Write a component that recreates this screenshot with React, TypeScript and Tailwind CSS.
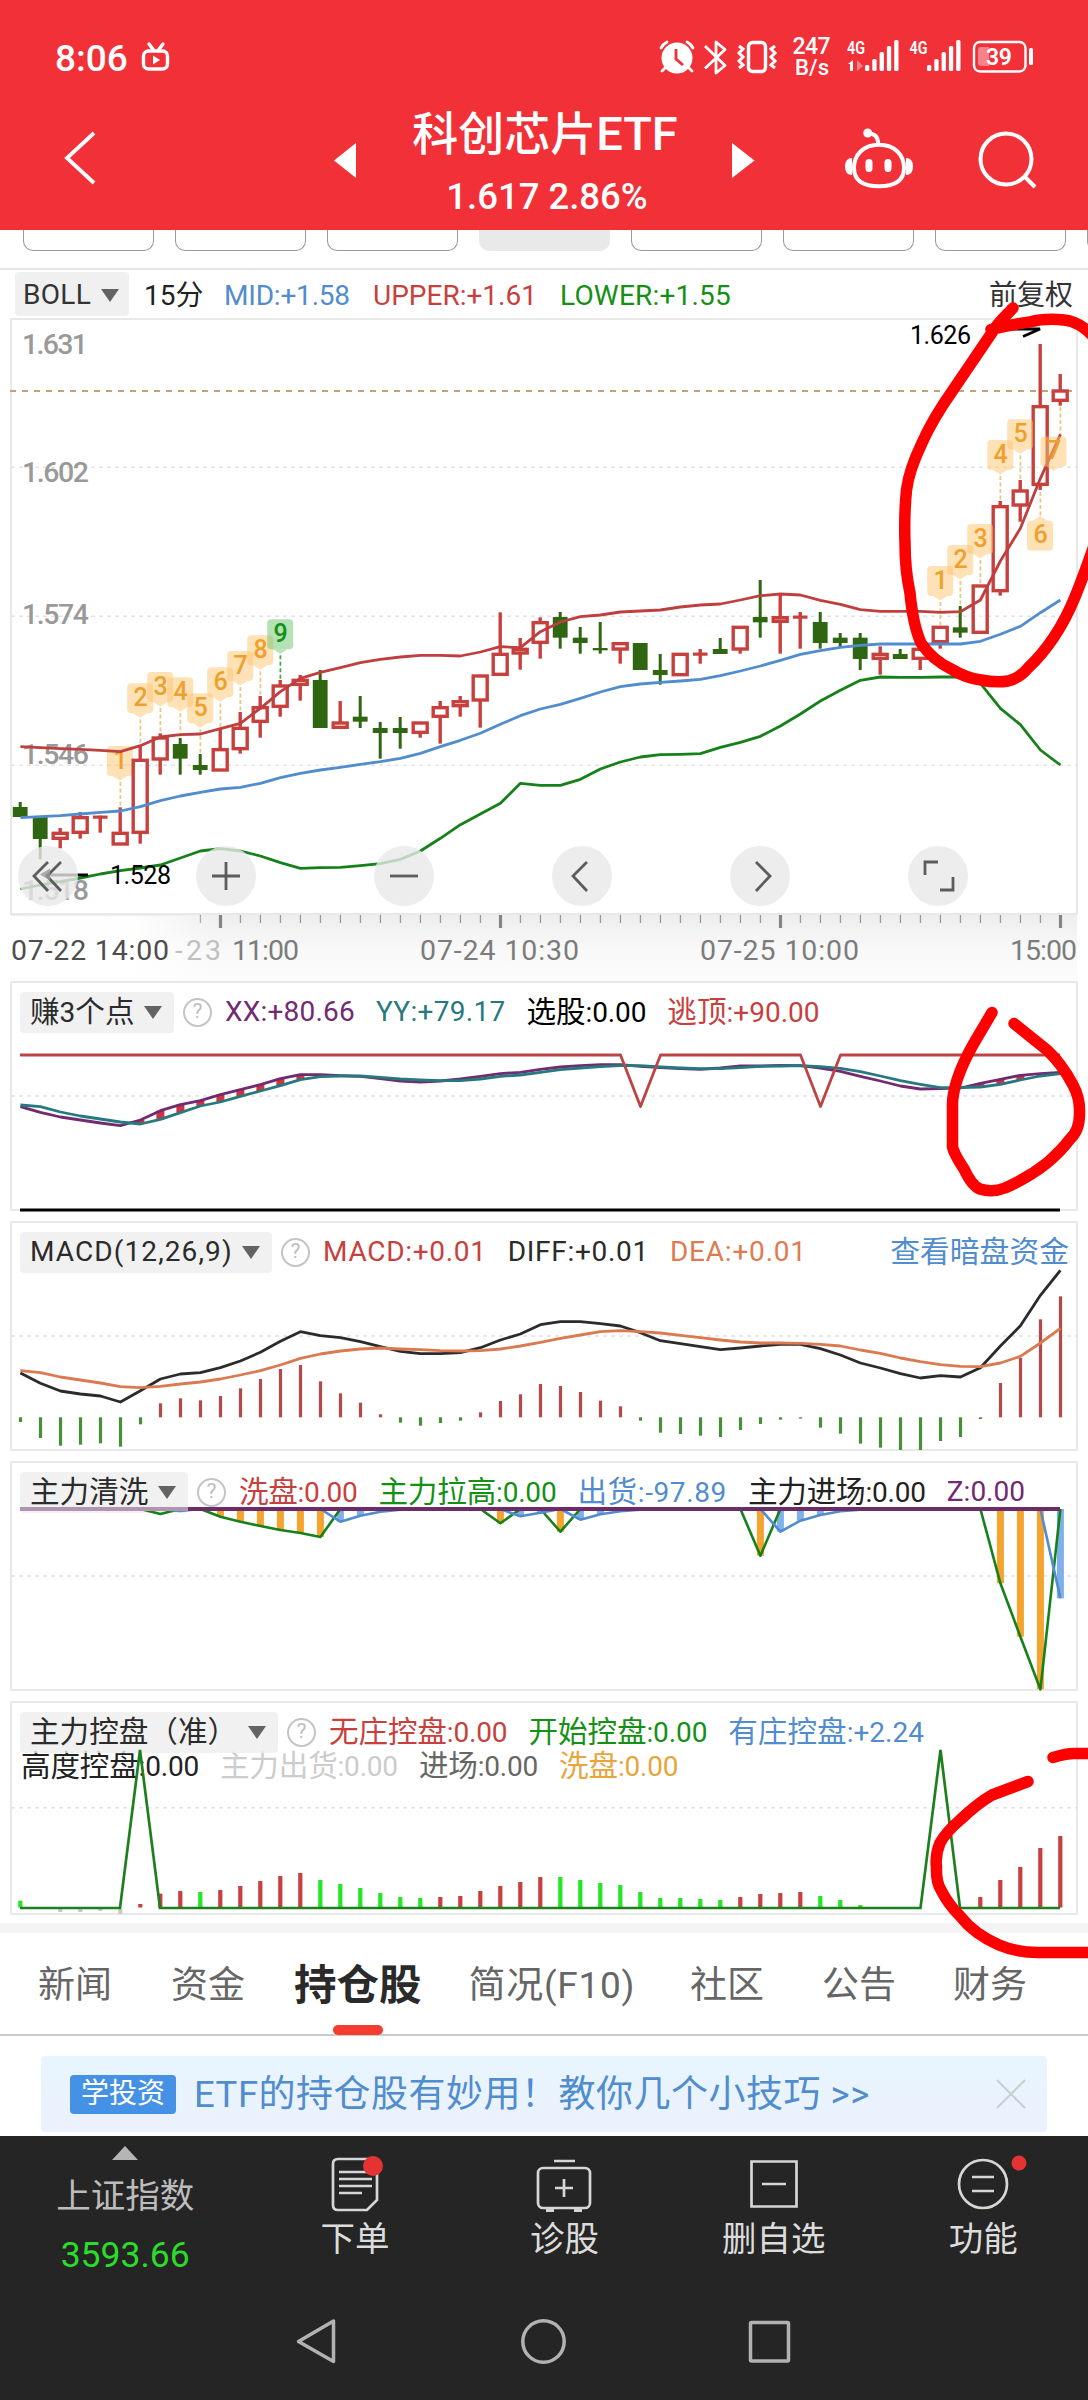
import React from "react";

const CJK = /([\u3000-\u9fff\uff00-\uffef]+)/;
const RED = "#c8403e";
const x = (i: number) => 20.4 + i * 20;

/** Mixed Chinese / Latin text: the two scripts are sized separately. */
function Mixed({ children, cjk = "text-[29.6px]" }: { children: string; cjk?: string }) {
  return (
    <>
      {children.split(CJK).filter(Boolean).map((s, i) => (
        <span key={i} className={CJK.test(s) ? cjk : ""}>{s}</span>
      ))}
    </>
  );
}

function line(vals: number[], base: number, start = 0) {
  return vals.map((v, i) => `${x(i + start).toFixed(1)},${(base + v / 3).toFixed(1)}`).join(" ");
}

/* ---------- data ---------- */
type Candle = [string, number, number, number, number];
const candles: Candle[] = [
  ["G", 606, 621, 651, 651], ["G", 651, 651, 717, 778], ["R", 684, 697, 718, 745], ["R", 636, 650, 700, 716],
  ["R", 647, 649, 653, 698], ["R", 622, 697, 735, 735], ["R", 438, 478, 700, 731], ["R", 400, 411, 480, 524],
  ["G", 414, 432, 476, 524], ["G", 462, 495, 510, 524], ["R", 387, 446, 513, 513], ["R", 336, 382, 449, 461],
  ["R", 288, 320, 367, 413], ["R", 240, 255, 322, 350], ["R", 225, 238, 256, 302], ["G", 210, 240, 384, 384],
  ["R", 303, 366, 385, 385], ["G", 288, 350, 365, 384], ["G", 366, 384, 399, 476], ["G", 351, 384, 399, 446],
  ["R", 366, 366, 400, 413], ["R", 303, 320, 352, 431], ["R", 288, 302, 320, 350], ["R", 225, 225, 303, 383],
  ["R", 37, 160, 226, 226], ["R", 114, 145, 162, 209], ["R", 52, 65, 130, 176], ["G", 36, 51, 113, 146],
  ["G", 81, 113, 129, 161], ["G", 66, 144, 151, 161], ["R", 128, 128, 150, 191], ["G", 129, 129, 210, 210],
  ["G", 162, 210, 225, 254], ["R", 160, 160, 227, 227], ["R", 147, 160, 164, 191], ["G", 114, 147, 162, 162],
  ["R", 79, 79, 150, 161], ["G", -60, 51, 67, 113], ["R", -15, 50, 67, 161], ["R", 36, 49, 53, 146],
  ["G", 36, 66, 129, 146], ["G", 99, 113, 129, 140], ["G", 99, 113, 177, 210], ["R", 139, 160, 178, 224],
  ["G", 147, 162, 177, 177], ["R", 145, 145, 178, 210], ["R", 79, 79, 128, 146], ["G", 18, 82, 98, 113],
  ["R", -45, -45, 100, 100], ["R", -297, -283, -25, -13], ["R", -360, -330, -282, -235],
  ["R", -768, -583, -344, -330], ["R", -678, -630, -596, -583],
];
const upper = [440, 443, 446, 448, 451, 455, 437, 411, 404, 402, 386, 370, 325, 275, 235, 217, 203, 188, 178, 171, 166, 166, 168, 156, 140, 143, 95, 66, 50, 45, 36, 33, 30, 21, 15, 12, 0, -13, -18, -15, 1, 13, 29, 34, 34, 34, 37, 35, 0, -117, -215, -365, -497];
const mid = [653, 650, 647, 642, 637, 633, 620, 602, 588, 577, 567, 562, 550, 533, 520, 510, 502, 493, 485, 475, 460, 440, 421, 400, 373, 347, 327, 313, 295, 276, 260, 252, 247, 243, 238, 227, 213, 198, 181, 163, 152, 142, 136, 132, 132, 132, 132, 132, 124, 103, 79, 38, 0];
const lower = [867, 855, 845, 834, 822, 812, 804, 795, 774, 753, 746, 753, 768, 788, 805, 803, 802, 797, 791, 778, 753, 715, 674, 642, 610, 550, 556, 556, 538, 507, 486, 471, 464, 463, 461, 442, 427, 409, 378, 342, 303, 271, 241, 231, 232, 232, 231, 231, 250, 325, 374, 450, 495];

const xx = [380, 397, 411, 420, 429, 437, 420, 392, 374, 362, 344, 329, 314, 296, 284, 284, 287, 289, 296, 303, 306, 303, 297, 289, 281, 277, 268, 261, 257, 254, 254, 259, 263, 266, 268, 264, 258, 258, 256, 257, 264, 274, 289, 303, 318, 327, 326, 324, 310, 298, 286, 281, 277];
const yy = [375, 380, 396, 408, 417, 426, 432, 418, 398, 378, 366, 349, 333, 317, 299, 290, 288, 288, 292, 297, 300, 302, 302, 297, 289, 285, 277, 269, 264, 260, 257, 257, 261, 264, 266, 266, 263, 259, 258, 257, 260, 265, 275, 288, 302, 313, 323, 323, 321, 313, 300, 288, 281];

const macd = [1326, 1374, 1397, 1394, 1390, 1400, 1333, 1270, 1255, 1261, 1248, 1225, 1197, 1167, 1155, 1204, 1240, 1268, 1303, 1328, 1337, 1329, 1322, 1297, 1263, 1243, 1212, 1218, 1236, 1262, 1279, 1322, 1358, 1362, 1367, 1371, 1350, 1332, 1319, 1316, 1343, 1361, 1391, 1403, 1410, 1410, 1383, 1371, 1317, 1209, 1134, 1018, 949];
const diff = [1179, 1210, 1233, 1242, 1248, 1266, 1232, 1197, 1182, 1178, 1163, 1143, 1117, 1084, 1055, 1067, 1073, 1085, 1100, 1114, 1121, 1121, 1118, 1103, 1080, 1062, 1034, 1025, 1025, 1031, 1038, 1058, 1082, 1091, 1100, 1109, 1104, 1098, 1093, 1093, 1106, 1125, 1149, 1164, 1181, 1194, 1187, 1191, 1163, 1098, 1037, 946, 871];
const dea = [1172, 1178, 1191, 1200, 1209, 1220, 1223, 1219, 1212, 1206, 1197, 1185, 1172, 1155, 1135, 1122, 1113, 1107, 1104, 1107, 1109, 1112, 1113, 1112, 1107, 1098, 1087, 1075, 1065, 1055, 1052, 1055, 1059, 1066, 1073, 1080, 1086, 1089, 1089, 1090, 1093, 1098, 1110, 1120, 1134, 1145, 1154, 1159, 1160, 1149, 1129, 1089, 1045];

const wash: Record<number, number> = { 7: 192, 10: 200, 11: 215, 12: 228, 13: 240, 14: 249, 15: 261, 24: 220, 27: 245, 37: 317, 49: 400, 50: 560, 51: 718 };
const ship: Record<number, number> = { 8: 183, 16: 215, 17: 197, 18: 185, 19: 179, 25: 199, 26: 188, 28: 209, 29: 193, 30: 184, 31: 179, 38: 245, 39: 212, 40: 195, 41: 184, 42: 179, 52: 445 };
const fill = (r: Record<number, number>, z: number) => candles.map((_, i) => r[i] ?? z);

const control: [number, string, number][] = [
  [0, "G", 1352], [6, "R", 1362], [7, "R", 1331], [8, "R", 1323], [9, "G", 1326], [10, "R", 1320], [11, "R", 1308], [12, "R", 1293], [13, "R", 1278],
  [14, "R", 1269], [15, "G", 1290], [16, "G", 1302], [17, "G", 1314], [18, "G", 1329], [19, "G", 1341], [20, "G", 1344], [21, "R", 1341], [22, "R", 1338],
  [23, "R", 1323], [24, "R", 1308], [25, "R", 1296], [26, "R", 1281], [27, "G", 1281], [28, "G", 1290], [29, "G", 1299], [30, "G", 1305], [31, "G", 1326],
  [32, "G", 1344], [33, "G", 1344], [34, "G", 1347], [35, "G", 1350], [36, "R", 1341], [37, "R", 1332], [38, "R", 1329], [39, "R", 1326], [40, "G", 1338],
  [41, "G", 1350], [42, "G", 1365], [48, "R", 1341], [49, "R", 1290], [50, "R", 1251], [51, "R", 1194], [52, "R", 1158],
];

/* index, top of the tag, digit */
const tags: [number, number, string][] = [
  [5, 746, "1"], [6, 683.3, "2"], [7, 672, "3"], [8, 677.3, "4"], [9, 693.3, "5"], [10, 667.3, "6"], [11, 651, "7"], [12, 635.3, "8"], [13, 619.3, "9"],
  [46, 566, "1"], [47, 545, "2"], [48, 524, "3"], [49, 440, "4"], [50, 419.3, "5"],
];

/* ---------- chart pieces ---------- */
function Frame({ top, h, children }: { top: number; h: number; children: React.ReactNode }) {
  return (
    <svg className="absolute left-0 top-0 block" width="1088" height={h} viewBox={`0 ${top} 1088 ${h}`}>
      {children}
    </svg>
  );
}

function Box({ y1, y2, grid }: { y1: number; y2: number; grid: number[] }) {
  return (
    <>
      <rect x="11" y={y1} width="1066" height={y2 - y1} fill="none" stroke="#e8e8e8" strokeWidth="2" />
      {grid.map((g) => (
        <line key={g} x1="11" x2="1077" y1={g} y2={g} stroke="#e3e3e3" strokeWidth="1.5" strokeDasharray="4 4" />
      ))}
    </>
  );
}

function Tag({ cx, top, n, down = true }: { cx: number; top: number; n: string; down?: boolean }) {
  const green = n === "9";
  return (
    <g>
      <rect x={cx - 13} y={top} width="26" height="30" rx="4" fill={green ? "#6cc56c" : "#ffc46e"} fillOpacity="0.5" />
      <path d={down ? `M${cx - 7} ${top + 30}h14l-7 4.5z` : `M${cx - 7} ${top}h14l-7 -4.5z`} fill={green ? "#6cc56c" : "#ffc46e"} fillOpacity="0.5" />
      <text x={cx + 0.5} y={top + 22.5} textAnchor="middle" fontSize="25" fontWeight="500" fill={green ? "#149014" : "#eda02c"}>{n}</text>
    </g>
  );
}

function MainChart() {
  return (
    <Frame top={318} h={663}>
      <defs>
        <linearGradient id="axis" x1="0" x2="0" y1="0" y2="1">
          <stop offset="0" stopColor="#eeeeee" /><stop offset="0.5" stopColor="#f8f8f8" /><stop offset="1" stopColor="#fcfcfc" />
        </linearGradient>
        <linearGradient id="fade" x1="0" x2="1" y1="0" y2="0">
          <stop offset="0" stopColor="#fff" /><stop offset="0.6" stopColor="#fff" stopOpacity="0.9" /><stop offset="1" stopColor="#fff" stopOpacity="0" />
        </linearGradient>
      </defs>
      <rect x="11" y="915" width="1066" height="66" fill="url(#axis)" />
      <Box y1={319} y2={914} grid={[467.3, 616.3, 765.3]} />
      <line x1="10" x2="1072" y1="391" y2="391" stroke="#c2a473" strokeWidth="2" strokeDasharray="6 6" />
      <g fill="#999" fontSize="28.5" fontWeight="500">
        <text x="22" y="353.5" textLength="66">1.631</text>
        <text x="22" y="481.5" textLength="67">1.602</text>
        <text x="22" y="624" textLength="67">1.574</text>
        <text x="22" y="764" textLength="67">1.546</text>
        <text x="22" y="899.5" textLength="67">1.518</text>
      </g>
      {tags.map(([i, t], k) => (
        <line key={k} x1={x(i)} x2={x(i)} y1={t + 36} y2={600 + candles[i][1] / 3} stroke={i === 13 ? "#4aa84a" : "#e3ca8c"} strokeWidth="1.8" strokeDasharray="4 2.5" />
      ))}
      <line x1={x(51)} x2={x(51)} y1="492" y2="516" stroke="#e3ca8c" strokeWidth="1.8" strokeDasharray="4 2.5" />
      <line x1={x(52)} x2={x(52)} y1="407" y2="436" stroke="#e3ca8c" strokeWidth="1.8" strokeDasharray="4 2.5" />
      {tags.slice(0, 1).map(([i, t, n]) => <Tag key={i} cx={x(i) - 0.5} top={t} n={n} />)}
      {candles.map(([c, h, a, b, l], i) => {
        const cx = x(i) - 0.2;
        const [H, A, B, L] = [h, a, b, l].map((v) => 600 + v / 3);
        return c === "G" ? (
          <g key={i} fill="#2f6612">
            <rect x={cx - 1.5} y={H} width="3" height={L - H} />
            <rect x={cx - 7.4} y={A} width="14.8" height={B - A} />
          </g>
        ) : (
          <g key={i} fill={RED} stroke={RED}>
            <rect x={cx - 1.7} y={H} width="3.4" height={Math.max(0, A - H)} stroke="none" />
            <rect x={cx - 1.7} y={B} width="3.4" height={Math.max(0, L - B)} stroke="none" />
            {B - A < 2
              ? <rect x={cx - 7.3} y={A - 0.8} width="14.6" height="3.2" stroke="none" />
              : <rect x={cx - 7} y={A + 1} width="14" height={Math.max(2, B - A - 2)} fill="#fff" fillOpacity="0.4" strokeWidth="3.4" />}
          </g>
        );
      })}
      <g fill="none" strokeWidth="2.8" strokeLinejoin="round">
        <polyline points={line(upper, 600)} stroke="#bf3f3f" />
        <polyline points={line(mid, 600)} stroke="#508cce" />
        <polyline points={line(lower, 600)} stroke="#16801a" />
      </g>
      {tags.slice(1).map(([i, t, n]) => <Tag key={i} cx={x(i) - 0.2} top={t} n={n} />)}
      <Tag cx={1040} top={520.5} n="6" down={false} />
      <Tag cx={1053.5} top={436.5} n="7" />
      <g fill="#000" fontSize="25">
        <text x="110" y="883.5" textLength="61">1.528</text>
        <text x="910" y="344" textLength="61">1.626</text>
      </g>
      <path d="M88 875H46" stroke="#000" strokeWidth="3" />
      <path d="M1010 329h30l-17 7.5" fill="none" stroke="#000" strokeWidth="3" />
      {candles.map((_, i) =>
        i < 9 ? null : i % 14 === 10 ? (
          <rect key={i} x={x(i) - 1.5} y="915" width="3.2" height="13" fill="#858585" />
        ) : (
          <rect key={i} x={x(i) - 0.6} y="915" width="1.3" height="8" fill="#999" />
        ),
      )}
      <rect x="8" y="916" width="212" height="62" fill="url(#fade)" />
      <g fill="#7c7c7c" fontSize="28.5">
        <text x="175" y="960" textLength="46" fill="#c0c0c0">-23</text>
        <text x="232" y="960" textLength="67">11:00</text>
        <text x="11" y="960" textLength="158" fill="#4d4d4d">07-22 14:00</text>
        <text x="420" y="960" textLength="159">07-24 10:30</text>
        <text x="700" y="960" textLength="159">07-25 10:00</text>
        <text x="1010" y="960" textLength="67">15:00</text>
      </g>
    </Frame>
  );
}

const roundIcons = [
  "M30 16L16 30l14 15M43 16L29 30l14 15",
  "M30 16v28M16 30h28",
  "M16 30h28",
  "M35 16L21 30l14 15",
  "M26 16l14 14l-14 15",
  "M17 29V16h13M45 31v13H32",
];

function RoundButtons() {
  return (
    <div className="absolute left-[17.5px] top-[528px] flex gap-[118px]">
      {roundIcons.map((d, i) => (
        <div key={i} className="size-[60px] rounded-full bg-[#e8e8e8]/80">
          <svg width="60" height="60" fill="none" stroke="#5c5c5c" strokeWidth="2.8">
            <path d={d} />
            {i === 0 && <path d="M22 28.5l10 -6v12z" fill="#999" stroke="none" opacity="0.8" />}
          </svg>
        </div>
      ))}
    </div>
  );
}

function Arrow() {
  return <svg className="shrink-0" width="18" height="13" viewBox="0 0 18 13"><path d="M0 0h18L9 13z" fill="#636363" /></svg>;
}

function Pill({ children, w }: { children: string; w: string }) {
  return (
    <div className={`flex h-[41px] shrink-0 items-center justify-between rounded bg-[#ededed]/80 pl-[10px] pr-[12px] text-[28px] text-[#2b2b2b] ${w}`}>
      <span><Mixed>{children}</Mixed></span>
      <Arrow />
    </div>
  );
}

function Help() {
  return (
    <div className="ml-[9px] mr-[13px] flex size-[29px] shrink-0 items-center justify-center rounded-full border-2 border-[#c4c4c4] text-[21px] text-[#bdbdbd]">?</div>
  );
}

function Row({ title, w, items }: { title: string; w: string; items: [string, string][] }) {
  return (
    <div className="relative flex h-[62px] items-center whitespace-nowrap pl-5 text-[28px]">
      <Pill w={w}>{title}</Pill>
      <Help />
      {items.map(([t, c]) => (
        <span key={t} className={`mr-[21px] ${c}`}><Mixed>{t}</Mixed></span>
      ))}
    </div>
  );
}

function Scribbles() {
  return (
    <svg className="pointer-events-none absolute left-0 top-0" width="1088" height="2400" fill="none" stroke="#fe0000" strokeWidth="11.5" strokeLinecap="round" strokeLinejoin="round">
      <path d="M1013 308C1006 316 998 322 991 334L953 390Q932 420 922 443Q909 470 906.500 490Q904 515 905 543Q905 570 910 593Q913 625 921 643Q932 660 953 670Q966 678 981 680Q996 683 1008 681Q1020 678 1028 668Q1042 655 1054 637Q1066 619 1075 597Q1084 575 1096 540L1130 400L1100 345Q1084 322 1064 320Q1045 318 1030 322Q1008 325 991 329.500" />
      <path d="M992 1012.500L974 1043Q963 1062 957 1080Q952 1096 952.500 1107V1147Q954 1154 964 1169Q972 1186 980 1189Q992 1193 1005 1188Q1028 1178 1047 1163Q1062 1150 1070 1139Q1080 1130 1079.500 1112Q1080 1098 1073 1085Q1062 1064 1047 1050L1014 1023.500" />
      <path d="M1028 1781.500L992 1795Q978 1803 960 1820Q946 1832 940 1843Q935 1855 936.500 1867Q936 1882 941 1890Q948 1904 960 1916Q974 1934 999 1945Q1018 1953 1041 1952.500H1100" />
      <path d="M1053 1757.500Q1066 1753.500 1074 1753.500H1100" />
    </svg>
  );
}

/* ---------- status bar and title ---------- */
function StatusBar() {
  const bars = [0, 1, 2, 3, 4];
  return (
    <div className="flex h-[116px] items-center pl-[55px] text-white">
      <span className="w-[84px] text-[37px] font-medium leading-none">8:06</span>
      <svg width="32" height="34" viewBox="139 42 32 34" fill="none" stroke="#fff" strokeWidth="3.4" strokeLinecap="round">
        <rect x="143.500" y="52" width="24" height="18" rx="5" /><path d="M149 45l4.500 6M163 45l-4.500 6" /><path d="M153 56.500v9l7 -4.500z" fill="#fff" stroke="none" />
      </svg>
      <svg className="ml-[475px]" width="410" height="50" viewBox="645 34 410 50" fill="none" stroke="#fff" strokeWidth="2.800">
        <circle cx="676" cy="59" r="15.500" fill="#fff" stroke="none" />
        <path d="M660 49q2 -4 6 -6M692 49q-2 -4 -6 -6M664 69l-3 3M688 69l3 3" strokeLinecap="round" />
        <path d="M675 50v10l7 6" stroke="#f23037" />
        <path d="M704 47l20 19.500L715 74V43l9 7.500L704 69.500" strokeLinejoin="round" />
        <rect x="747.500" y="43.500" width="17" height="29" rx="4" strokeWidth="3.4" />
        <path d="M738 47l4 3l-4 4l4 4l-4 4l4 4l-4 3M774 47l-4 3l4 4l-4 4l4 4l-4 4l4 3" strokeWidth="3" />
        <g fill="#fff" stroke="none">
          <text x="791.500" y="54.500" fontSize="23" fontWeight="500" textLength="38">247</text>
          <text x="794" y="76" fontSize="22" fontWeight="500" textLength="34">B/s</text>
          <text x="846" y="54.500" fontSize="19" fontWeight="600" textLength="18" lengthAdjust="spacingAndGlyphs">4G</text>
          <text x="908.500" y="54.500" fontSize="19" fontWeight="600" textLength="18" lengthAdjust="spacingAndGlyphs">4G</text>
          <path d="M847 65l5 -4v11h-3v-7z" /><path d="M856 61v11l6 -5z" opacity="0.4" />
          {bars.map((b) => <rect key={b} x={864 + b * 7.300} y={[66, 60, 53, 47, 41][b]} width="4.3" height={[6, 12, 19, 25, 31][b]} rx="1.500" />)}
          {bars.map((b) => <rect key={b} x={926 + b * 7.300} y={[66, 60, 53, 47, 41][b]} width="4.3" height={[6, 12, 19, 25, 31][b]} rx="1.500" />)}
          <path d="M980 48h8v19h-8q-3 0 -3 -3V51q0 -3 3 -3z" opacity="0.4" />
          <text x="985" y="66" fontSize="23" fontWeight="600" textLength="26">39</text>
          <rect x="1028" y="49" width="4" height="17" rx="1.500" />
        </g>
        <rect x="973" y="43" width="51.500" height="29.500" rx="6" strokeWidth="2.400" />
      </svg>
    </div>
  );
}

function TitleBar() {
  return (
    <div className="flex h-[114px] text-white">
      <svg width="400" height="114" viewBox="0 116 400 114">
        <path d="M94 133L67 158l27 25" fill="none" stroke="#fff" strokeWidth="3.800" />
        <path d="M356 143v35L334 160.500z" fill="#fff" />
      </svg>
      <div className="flex w-[290px] flex-col items-center whitespace-nowrap">
        <div className="mt-[-10px] h-[56px] text-[47px] font-medium leading-[56px]"><Mixed cjk="text-[46px]">科创芯片ETF</Mixed></div>
        <div className="ml-[4px] mt-[13px] text-[36.500px] font-medium leading-[44px]">1.617 2.86%</div>
      </div>
      <svg width="398" height="114" viewBox="690 116 398 114" fill="none" stroke="#fff" strokeWidth="4">
        <path d="M732 143v35l22.500 -17.500z" fill="#fff" stroke="none" />
        <path d="M879 144.700C863 144.700 854 155 854 168C854 180 862 186.300 879 186.300S904 180 904 168C904 155 895 144.700 879 144.700z" />
        <path d="M878 143q0 -9 -9 -9.500" />
        <circle cx="867.700" cy="133" r="4.500" fill="#fff" stroke="none" />
        <path d="M852 158q-7 0 -7 8.500t7 8.500zM906 158q7 0 7 8.500t-7 8.500z" fill="#fff" stroke="none" />
        <path d="M869 162.500v6M888 162.500v6" strokeWidth="7" strokeLinecap="round" />
        <circle cx="1006" cy="159" r="25.500" /><path d="M1025 177l10 10" />
      </svg>
    </div>
  );
}

function Tool({ label, children }: { label: string; children: React.ReactNode }) {
  return (
    <div className="flex w-[209.400px] flex-col items-center">
      <svg className="mt-[14px]" width="100" height="66" viewBox="-50 -34 100 66" fill="none" stroke="#d6d6d6" strokeWidth="2.700">{children}</svg>
      <span className="text-[34.500px] leading-[46px] text-[#dcdcdc]">{label}</span>
    </div>
  );
}

export default function App() {
  const tabs: [string, string][] = [["资金", "ml-[59px]"], ["持仓股", "ml-[49px]"], ["简况(F10)", "ml-[47px] tracking-[0.7px]"], ["社区", "ml-[55px]"], ["公告", "ml-[58px]"], ["财务", "ml-[57px]"]];
  return (
    <div className="relative h-[2400px] w-[1088px] overflow-hidden bg-white font-[Roboto,'Noto_Sans_CJK_SC',sans-serif]">
      <header className="h-[230px] bg-[#f23037]">
        <StatusBar />
        <TitleBar />
      </header>

      <div className="flex h-[40px] gap-[21px] overflow-hidden border-b-2 border-[#e6e6e6] pl-[23px]">
        {[0, 1, 2, 3, 4, 5, 6, 7].map((i) => (
          <div key={i} className={`h-[21px] w-[131px] shrink-0 rounded-b-[10px] ${i === 3 ? "bg-[#e9e9e9]" : "border border-t-0 border-[#999]"}`} />
        ))}
      </div>

      <div className="flex h-[48px] items-center whitespace-nowrap pl-[15px] pr-[15px] text-[28px]">
        <div className="flex h-[44px] w-[114px] items-center justify-between rounded bg-[#f0f0f0] pl-[8px] pr-[10px] pt-[2px] text-[#333]"><span className="tracking-[0.3px]">BOLL</span><Arrow /></div>
        <span className="ml-[15px] w-[56px] pt-[3px] text-[#222]"><Mixed cjk="text-[28px]">15分</Mixed></span>
        <span className="ml-[24px] w-[128px] pt-[3px] tracking-[-0.2px] text-[#508cce]">MID:+1.58</span>
        <span className="ml-[21px] w-[166px] pt-[3px] text-[#c8403e]">UPPER:+1.61</span>
        <span className="ml-[21px] pt-[3px] tracking-[0.2px] text-[#149014]">LOWER:+1.55</span>
        <span className="ml-auto pt-[3px] text-[28px] text-[#333]">前复权</span>
      </div>

      <section className="relative h-[663px]">
        <MainChart />
        <RoundButtons />
      </section>

      <section className="relative h-[240px]">
        <Frame top={981} h={240}>
          <Box y1={982} y2={1210} grid={[1096]} />
          {xx.map((v, i) => ((i >= 6 && i <= 14) || (i >= 48 && i <= 51)) && yy[i] > v ? (
            <rect key={i} x={x(i) - 4} y={980 + v / 3} width="8" height={(yy[i] - v) / 3} fill="#d2323c" />
          ) : null)}
          <g fill="none" strokeWidth="2.800" strokeLinejoin="round">
            <polyline points={line(xx, 980)} stroke="#722a70" />
            <polyline points={line(yy, 980)} stroke="#26797e" />
            <path d="M20 1055H620.500L640.500 1106.500L660.500 1055H800.500L820.500 1106.500L840.500 1055H1060" stroke="#bb4444" />
            <path d="M20 1210H1060" stroke="#000" strokeWidth="3" />
          </g>
        </Frame>
        <Row title="赚3个点" w="w-[154px]" items={[["XX:+80.66", "text-[#722a70] tracking-[0.2px]"], ["YY:+79.17", "text-[#26797e] tracking-[0.3px]"], ["选股:0.00", "text-black tracking-[-0.1px]"], ["逃顶:+90.00", "text-[#c8403e]"]]} />
      </section>

      <section className="relative h-[240px]">
        <Frame top={1221} h={240}>
          <Box y1={1222} y2={1450} grid={[1336]} />
          {macd.map((v, i) => {
            const y = 980 + v / 3;
            return <rect key={i} x={x(i) - 1.500} y={Math.min(y, 1417.300)} width="3.200" height={Math.max(1, Math.abs(y - 1417.300))} fill={y < 1417 ? "#b34a48" : "#479038"} />;
          })}
          <g fill="none" strokeWidth="2.800" strokeLinejoin="round">
            <polyline points={line(diff, 980)} stroke="#2b2b2b" />
            <polyline points={line(dea, 980)} stroke="#db7950" />
          </g>
        </Frame>
        <div className="relative flex">
          <Row title="MACD(12,26,9)" w="w-[252px] tracking-[1.1px]" items={[["MACD:+0.01", "text-[#c8403e] tracking-[0.7px]"], ["DIFF:+0.01", "text-[#2b2b2b] tracking-[0.7px]"], ["DEA:+0.01", "text-[#e07a50] tracking-[0.8px]"]]} />
          <span className="ml-auto mr-[19px] text-[29.800px] leading-[61px] text-[#508cce]">查看暗盘资金</span>
        </div>
      </section>

      <section className="relative h-[240px]">
        <Row title="主力清洗" w="w-[168px]" items={[["洗盘:0.00", "text-[#c8403e] tracking-[-0.3px]"], ["主力拉高:0.00", "text-[#149014] tracking-[-0.2px]"], ["出货:-97.89", "text-[#508cce] tracking-[0.6px]"], ["主力进场:0.00", "text-[#222] tracking-[-0.2px]"], ["Z:0.00", "text-[#722a70]"]]} />
        <Frame top={1461} h={240}>
          <Box y1={1462} y2={1690} grid={[1576]} />
          {Object.entries(wash).map(([i, v]) => +i > 7 && <rect key={i} x={x(+i) - 3.500} y="1509" width="7" height={1450 + v / 3 - 1509} fill="#f2a42f" />)}
          {Object.entries(ship).map(([i, v]) => +i > 8 && <rect key={i} x={x(+i) - 3.500} y="1509" width="7" height={1450 + v / 3 - 1509} fill="#7fb0ea" />)}
          <g fill="none" strokeWidth="2.600" strokeLinejoin="round">
            <polyline points={line(fill(wash, 177), 1450)} stroke="#16801a" />
            <polyline points={line(fill(ship, 177), 1450)} stroke="#508cce" />
            <path d="M188 1509H1060" stroke="#6b2c68" strokeWidth="4" />
            <path d="M20 1509H188" stroke="#b195b0" strokeWidth="4" />
          </g>
        </Frame>
      </section>

      <section className="relative h-[222px]">
        <Row title="主力控盘（准）" w="w-[258px]" items={[["无庄控盘:0.00", "text-[#c8403e] tracking-[-0.15px]"], ["开始控盘:0.00", "text-[#149014] tracking-[-0.1px]"], ["有庄控盘:+2.24", "text-[#508cce]"]]} />
        <div className="mt-[-15px] flex gap-[21px] whitespace-nowrap pl-[21px] text-[28px] leading-[36px] tracking-[-0.2px]">
          <span className="text-[#222]"><Mixed>高度控盘:0.00</Mixed></span>
          <span className="text-[#ccc]"><Mixed>主力出货:0.00</Mixed></span>
          <span className="text-[#666]"><Mixed>进场:0.00</Mixed></span>
          <span className="text-[#eaa43c]"><Mixed>洗盘:0.00</Mixed></span>
        </div>
        <Frame top={1701} h={222}>
          <Box y1={1702} y2={1914} grid={[1807.700]} />
          {control.map(([i, c, v]) => (
            <rect key={i} x={x(i) - 2.200} y={1450 + v / 3} width="4.200" height={1907.500 - 1450 - v / 3} fill={c === "G" ? "#24e724" : RED} />
          ))}
          {[2, 3, 4, 5].map((i) => <rect key={i} x={x(i) - 2.200} y="1909" width="4.200" height={[3, 3, 2, 5][i - 2]} fill="#c9c9c9" />)}
          <path d="M20 1908H120L140 1750L160 1908H920.500L940.500 1750L960 1908H1060" fill="none" stroke="#1d7f1d" strokeWidth="2.700" />
        </Frame>
      </section>

      <div className="h-[10px] bg-[#f4f4f4]" />
      <nav className="flex h-[103px] items-center whitespace-nowrap border-b-2 border-[#cacaca] pl-[38px] pt-[4px] text-[37px] text-[#666]">
        <span>新闻</span>
        {tabs.map(([t, m]) => (
          <span key={t} className={`${m} ${t === "持仓股" ? "relative text-[42.5px] font-bold text-[#2a2a2a]" : ""}`}>
            <Mixed cjk="">{t}</Mixed>
            {t === "持仓股" && <i className="absolute bottom-[-17.5px] left-[39px] h-[10px] w-[50px] rounded-full bg-[#f63c31]" />}
          </span>
        ))}
      </nav>
      <div className="h-[100px] px-[41px] pt-[20px]">
        <div className="flex h-[76px] items-center whitespace-nowrap rounded-sm bg-gradient-to-b from-[#e7f5ff] to-[#ebf1fd] pl-[29px] pr-[21px]">
          <span className="flex h-[39px] w-[106px] items-center justify-center rounded-sm bg-[#4591e6] text-[28px] text-white">学投资</span>
          <span className="ml-[18px] pt-[2px] text-[36.500px] tracking-[0.5px] text-[#508cce]"><Mixed cjk="text-[37px]">ETF的持仓股有妙用！教你几个小技巧 &gt;&gt;</Mixed></span>
          <svg className="ml-auto" width="30" height="30" stroke="#c9ced4" strokeWidth="2"><path d="M1 1l28 28M29 1L1 29" /></svg>
        </div>
      </div>

      <footer className="h-[264px] bg-[#252525]">
        <div className="flex h-[144px]">
          <div className="flex w-[250.400px] flex-col items-center">
            <svg className="mt-[10px]" width="26" height="14"><path d="M0 14L13 0l13 14z" fill="#b5b5b5" /></svg>
            <span className="mt-[12px] text-[34.500px] leading-[48px] text-[#bcbcbc]">上证指数</span>
            <span className="mt-[13px] text-[35.5px] leading-[44px] text-[#2bdc2b]">3593.66</span>
          </div>
          <Tool label="下单">
            <path d="M-17 -25H17Q22 -25 22 -20V16L12 26H-17Q-22 26 -22 21V-20Q-22 -25 -17 -25zM-16 -12H17M-16 -5H17M-16 2H17M-16 9H7" />
            <circle cx="18" cy="-18" r="10" fill="#e53333" stroke="none" />
          </Tool>
          <Tool label="诊股">
            <rect x="-26" y="-16" width="52" height="40" rx="5" /><path d="M-10 -23H11M-9 4H9M0 -5V13" /><path d="M-18 26h8M10 26h8" strokeWidth="4" />
          </Tool>
          <Tool label="删自选">
            <path d="M-22.500 -22.500H22.500V22.500H-22.500zM-12 0H12" />
          </Tool>
          <Tool label="功能">
            <circle r="24" /><path d="M-11 -7H11M-11 7H11" /><circle cx="36" cy="-21" r="7.500" fill="#e53333" stroke="none" />
          </Tool>
        </div>
        <svg width="1088" height="120" viewBox="0 2280 1088 120" fill="none" stroke="#b2b2b2" strokeWidth="3.500" strokeLinejoin="round">
          <path d="M333.500 2321V2361.500L298.500 2341.500z" /><circle cx="543.500" cy="2341.500" r="20.700" /><rect x="750.500" y="2322.500" width="38" height="38.500" rx="1" />
        </svg>
      </footer>
      <Scribbles />
    </div>
  );
}
